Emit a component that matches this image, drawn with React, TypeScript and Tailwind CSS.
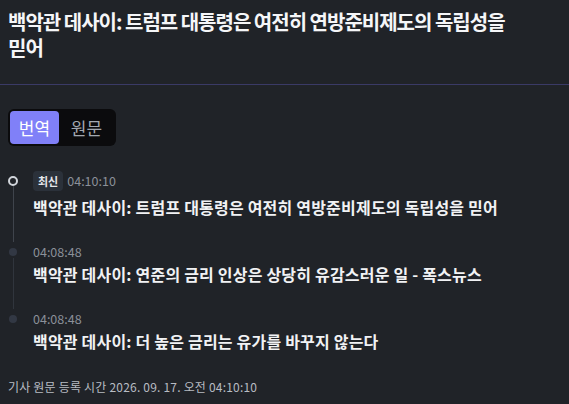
import { useState } from "react";

type Item = { time: string; title: string; latest?: boolean };

const items: Item[] = [
  { time: "04:10:10", title: "백악관 데사이: 트럼프 대통령은 여전히 연방준비제도의 독립성을 믿어", latest: true },
  { time: "04:08:48", title: "백악관 데사이: 연준의 금리 인상은 상당히 유감스러운 일 - 폭스뉴스" },
  { time: "04:08:48", title: "백악관 데사이: 더 높은 금리는 유가를 바꾸지 않는다" },
];

const font = { fontFamily: '"Noto Sans CJK KR", "Noto Sans", sans-serif' };

const App = () => {
  const [tab, setTab] = useState<"tr" | "orig">("tr");

  return (
    <div className="min-h-[404px] w-[569px] bg-[#202328] text-white" style={font}>
      <div className="pl-2 pr-[30px] pt-[9px] pb-[23px] border-b border-[#3a3a66]">
        <h1 className="text-[20px] leading-[26px] font-bold text-[#f5f6f8] tracking-[-1px] break-keep">
          백악관 데사이: 트럼프 대통령은 여전히 연방준비제도의 독립성을 믿어
        </h1>
      </div>

      <div className="px-2 pt-6">
        <div className="inline-flex rounded-md bg-[#0b0b0d] p-[2px]">
          <button
            onClick={() => setTab("tr")}
            className={`h-[33px] w-[49px] rounded text-[17px] ${tab === "tr" ? "bg-[#8080f8] text-white" : "text-[#a3a8b0]"}`}
          >
            번역
          </button>
          <button
            onClick={() => setTab("orig")}
            className={`h-[33px] w-[55px] rounded text-[17px] ${tab === "orig" ? "bg-[#8080f8] text-white" : "text-[#a3a8b0]"}`}
          >
            원문
          </button>
        </div>
      </div>

      <div className="px-2 mt-[23px]">
        {items.map((it, i) => (
          <div key={i} className="flex gap-[15px]">
            <div className="flex w-[10px] flex-col items-center">
              {it.latest ? (
                <>
                  <div className="mt-[7px] h-[10px] w-[10px] rounded-full border-2 border-[#d1d5db]" />
                  <div className="w-px flex-1 bg-[#3f444c]" />
                </>
              ) : (
                <>
                  <div className="mt-[6px] h-[8px] w-[8px] rounded-full bg-[#323844]" />
                  {i < items.length - 1 && <div className="mt-[2px] w-px flex-1 bg-[#30353d]" />}
                </>
              )}
            </div>
            <div className="pb-[23px]">
              <div className={`flex items-center gap-1 ${it.latest ? "h-6" : "h-5"}`}>
                {it.latest && (
                  <span className="rounded bg-[#2b313a] px-[5px] h-5 flex items-center text-[11px] font-bold text-[#e5e7eb]">
                    최신
                  </span>
                )}
                <span className="text-[12.5px] text-[#8b9099]">{it.time}</span>
              </div>
              <div className={`${it.latest ? "mt-[2px]" : ""} text-[16px] leading-[24px] font-bold text-[#f1f2f4] tracking-[0.2px]`}>
                {it.title}
              </div>
            </div>
          </div>
        ))}
      </div>

      <div className="px-2 mt-[3px] text-[12px] leading-4 text-[#b8bcc3] tracking-[0.2px]">
        기사 원문 등록 시간 2026. 09. 17. 오전 04:10:10
      </div>
    </div>
  );
};

export default App;
